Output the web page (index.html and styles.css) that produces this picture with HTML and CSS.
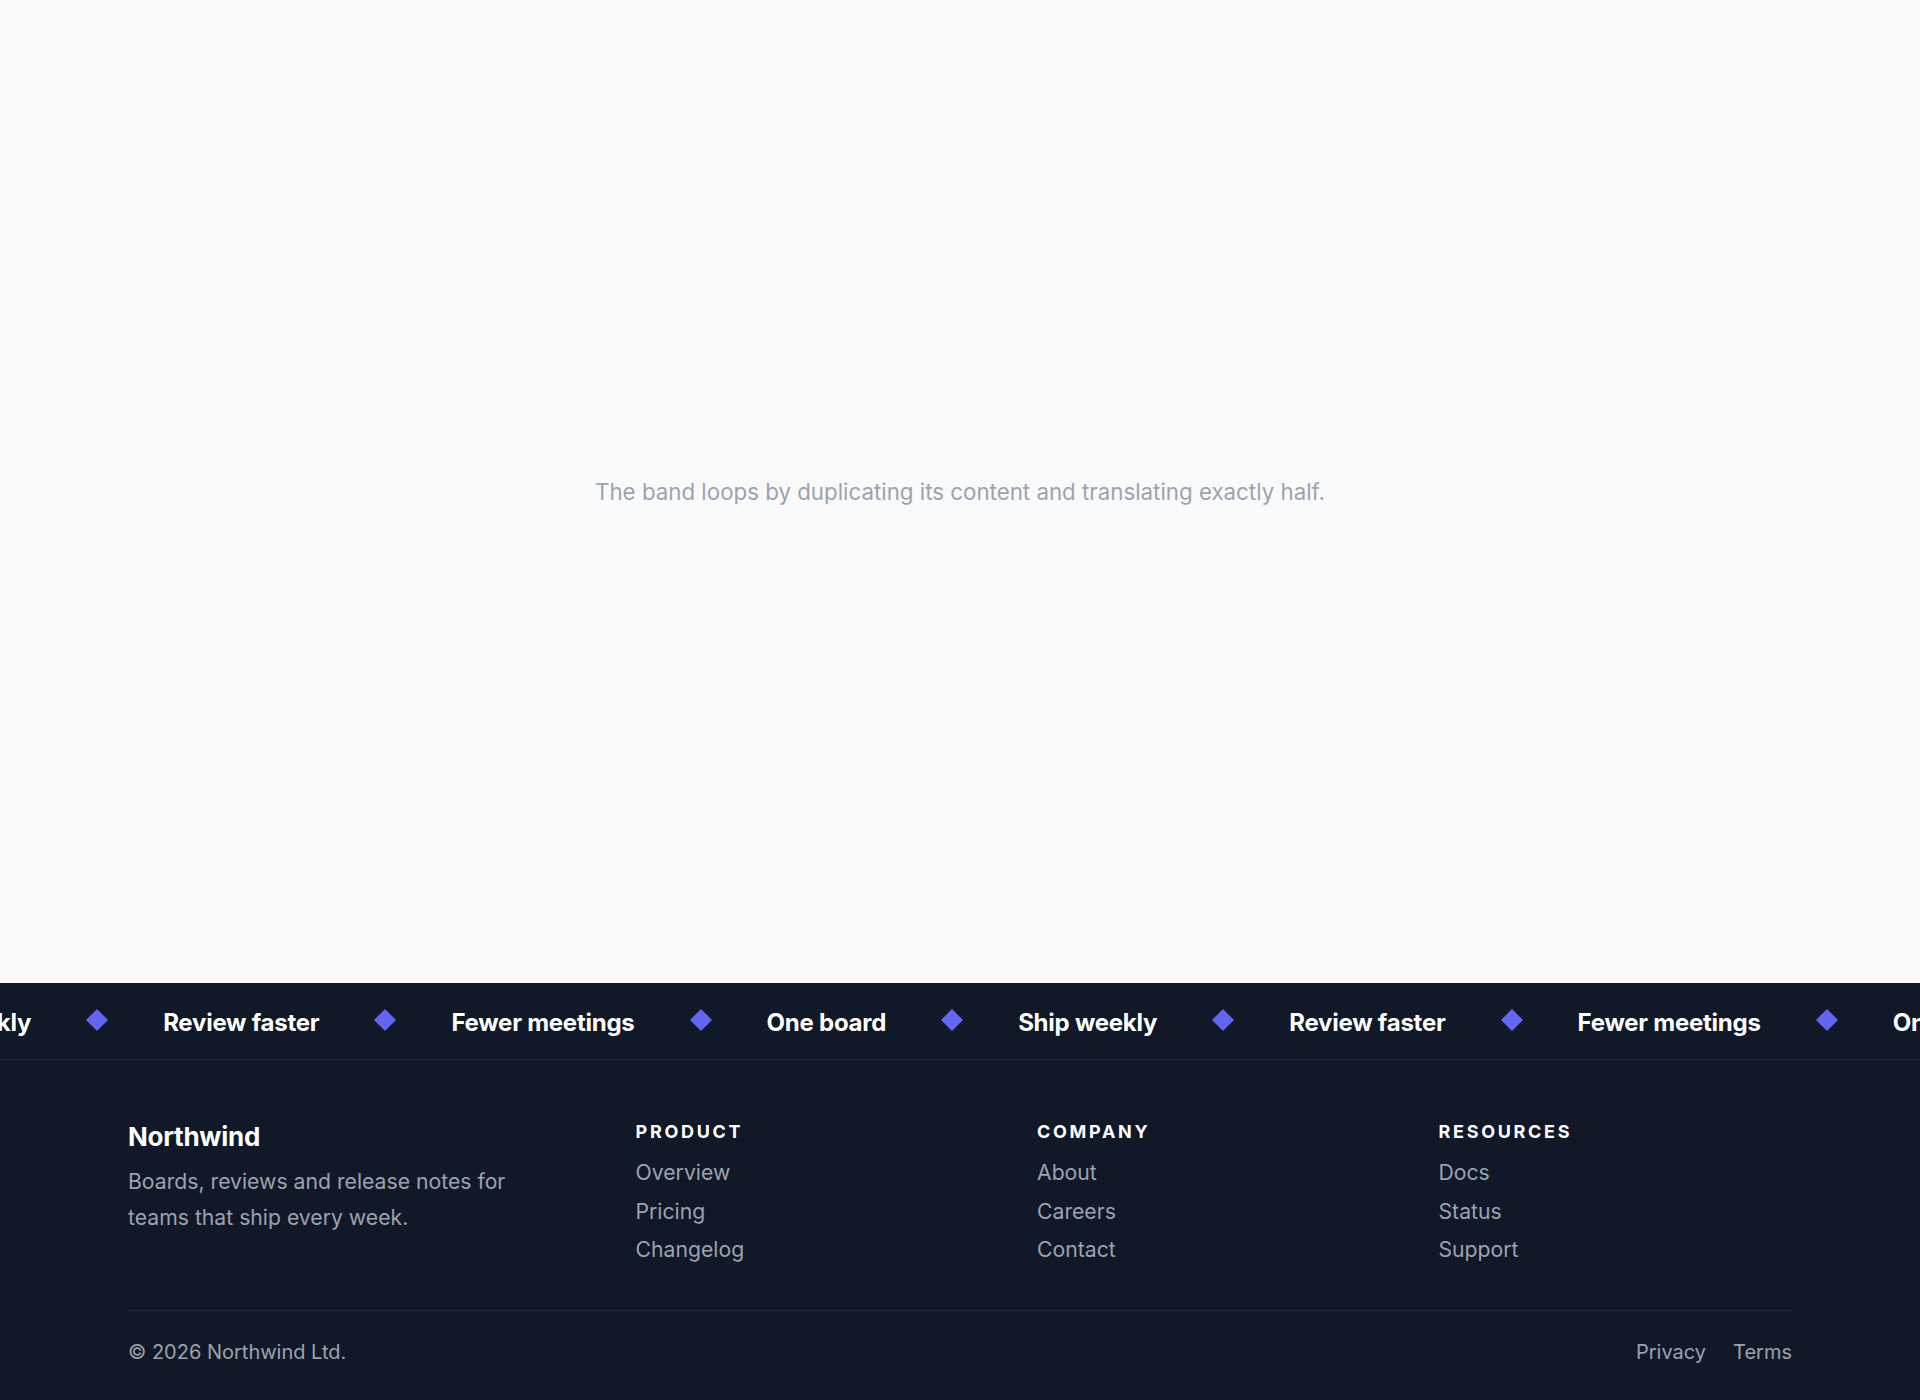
FILE: index.html
```html
<!DOCTYPE html>
<html lang="en">
<head>
<meta charset="utf-8">
<title>Northwind</title>
<link rel="stylesheet" href="styles.css">
</head>
<body>
<div class="page">
  <main class="stage">
    <p class="note">The band loops by duplicating its content and translating exactly half.</p>
  </main>
  <footer class="footer">
    <div class="band">
      <div class="track">
        <span class="item">Ship weekly</span>
        <svg class="dot" viewBox="0 0 22 22"><polygon points="11,0 22,11 11,22 0,11"/></svg>
        <span class="item">Review faster</span>
        <svg class="dot" viewBox="0 0 22 22"><polygon points="11,0 22,11 11,22 0,11"/></svg>
        <span class="item">Fewer meetings</span>
        <svg class="dot" viewBox="0 0 22 22"><polygon points="11,0 22,11 11,22 0,11"/></svg>
        <span class="item">One board</span>
        <svg class="dot" viewBox="0 0 22 22"><polygon points="11,0 22,11 11,22 0,11"/></svg>
        <span class="item">Ship weekly</span>
        <svg class="dot" viewBox="0 0 22 22"><polygon points="11,0 22,11 11,22 0,11"/></svg>
        <span class="item">Review faster</span>
        <svg class="dot" viewBox="0 0 22 22"><polygon points="11,0 22,11 11,22 0,11"/></svg>
        <span class="item">Fewer meetings</span>
        <svg class="dot" viewBox="0 0 22 22"><polygon points="11,0 22,11 11,22 0,11"/></svg>
        <span class="item">One board</span>
        <svg class="dot" viewBox="0 0 22 22"><polygon points="11,0 22,11 11,22 0,11"/></svg>
      </div>
    </div>
    <div class="footer-inner">
      <div class="footer-grid">
        <div class="brand">
          <div class="brand-name">Northwind</div>
          <p class="brand-desc">Boards, reviews and release notes for<br>teams that ship every week.</p>
        </div>
        <div class="col">
          <h4 class="col-title">Product</h4>
          <ul class="links">
            <li><a href="#">Overview</a></li>
            <li><a href="#">Pricing</a></li>
            <li><a href="#">Changelog</a></li>
          </ul>
        </div>
        <div class="col">
          <h4 class="col-title">Company</h4>
          <ul class="links">
            <li><a href="#">About</a></li>
            <li><a href="#">Careers</a></li>
            <li><a href="#">Contact</a></li>
          </ul>
        </div>
        <div class="col">
          <h4 class="col-title">Resources</h4>
          <ul class="links">
            <li><a href="#">Docs</a></li>
            <li><a href="#">Status</a></li>
            <li><a href="#">Support</a></li>
          </ul>
        </div>
      </div>
      <div class="footer-bottom">
        <span class="copy">© 2026 Northwind Ltd.</span>
        <nav class="legal">
          <a href="#">Privacy</a>
          <a href="#">Terms</a>
        </nav>
      </div>
    </div>
  </footer>
</div>
</body>
</html>
```

FILE: styles.css
```css
* { box-sizing: border-box; }

html, body {
  margin: 0;
  padding: 0;
}

body {
  background: #f9fafb;
  font-family: Inter, "Noto Sans", "Liberation Sans", sans-serif;
  color: #111827;
}

.page {
  min-height: 100vh;
  display: flex;
  flex-direction: column;
}

.stage {
  flex: 1;
  display: flex;
  align-items: center;
  justify-content: center;
}

.note {
  margin: 0;
  font-size: 22.3px;
  line-height: 30px;
  color: #9ca3af;
}

.footer {
  background: #111827;
}

.band {
  height: 77px;
  overflow: hidden;
  border-bottom: 1px solid #1f2937;
  display: flex;
  align-items: center;
}

.track {
  display: flex;
  align-items: center;
  gap: 55px;
  white-space: nowrap;
  transform: translateX(-108px);
}

.item {
  font-size: 24px;
  font-weight: 700;
  color: #ffffff;
  letter-spacing: -0.01em;
  line-height: 32px;
  padding-top: 3px;
}

.dot {
  width: 22px;
  height: 22px;
  flex: none;
  fill: #6366f1;
  margin-top: -3px;
}

.footer-inner {
  padding: 0 128px;
}

.footer-grid {
  display: grid;
  grid-template-columns: 1.3fr 1fr 1fr 1fr;
  column-gap: 48px;
  padding: 58px 0 46px;
}

.brand-name {
  font-size: 26px;
  line-height: 31px;
  font-weight: 700;
  color: #ffffff;
  letter-spacing: -0.01em;
  margin-top: 3px;
}

.brand-desc {
  margin: 12px 0 0;
  font-size: 21.2px;
  line-height: 35.4px;
  color: #9ca3af;
}

.col-title {
  margin: 0;
  font-size: 18px;
  line-height: 27px;
  font-weight: 700;
  letter-spacing: 0.15em;
  text-transform: uppercase;
  color: #ffffff;
}

.links {
  list-style: none;
  margin: 12px 0 0;
  padding: 0;
  display: flex;
  flex-direction: column;
  gap: 8.3px;
}

.links li {
  font-size: 21.2px;
  line-height: 30px;
}

.links a,
.legal a {
  color: #9ca3af;
  text-decoration: none;
}

.footer-bottom {
  border-top: 1px solid #1f2937;
  display: flex;
  justify-content: space-between;
  align-items: center;
  padding: 26px 0 33px;
  font-size: 20px;
  line-height: 30px;
  color: #9ca3af;
}

.legal {
  display: flex;
  gap: 27px;
}
```
